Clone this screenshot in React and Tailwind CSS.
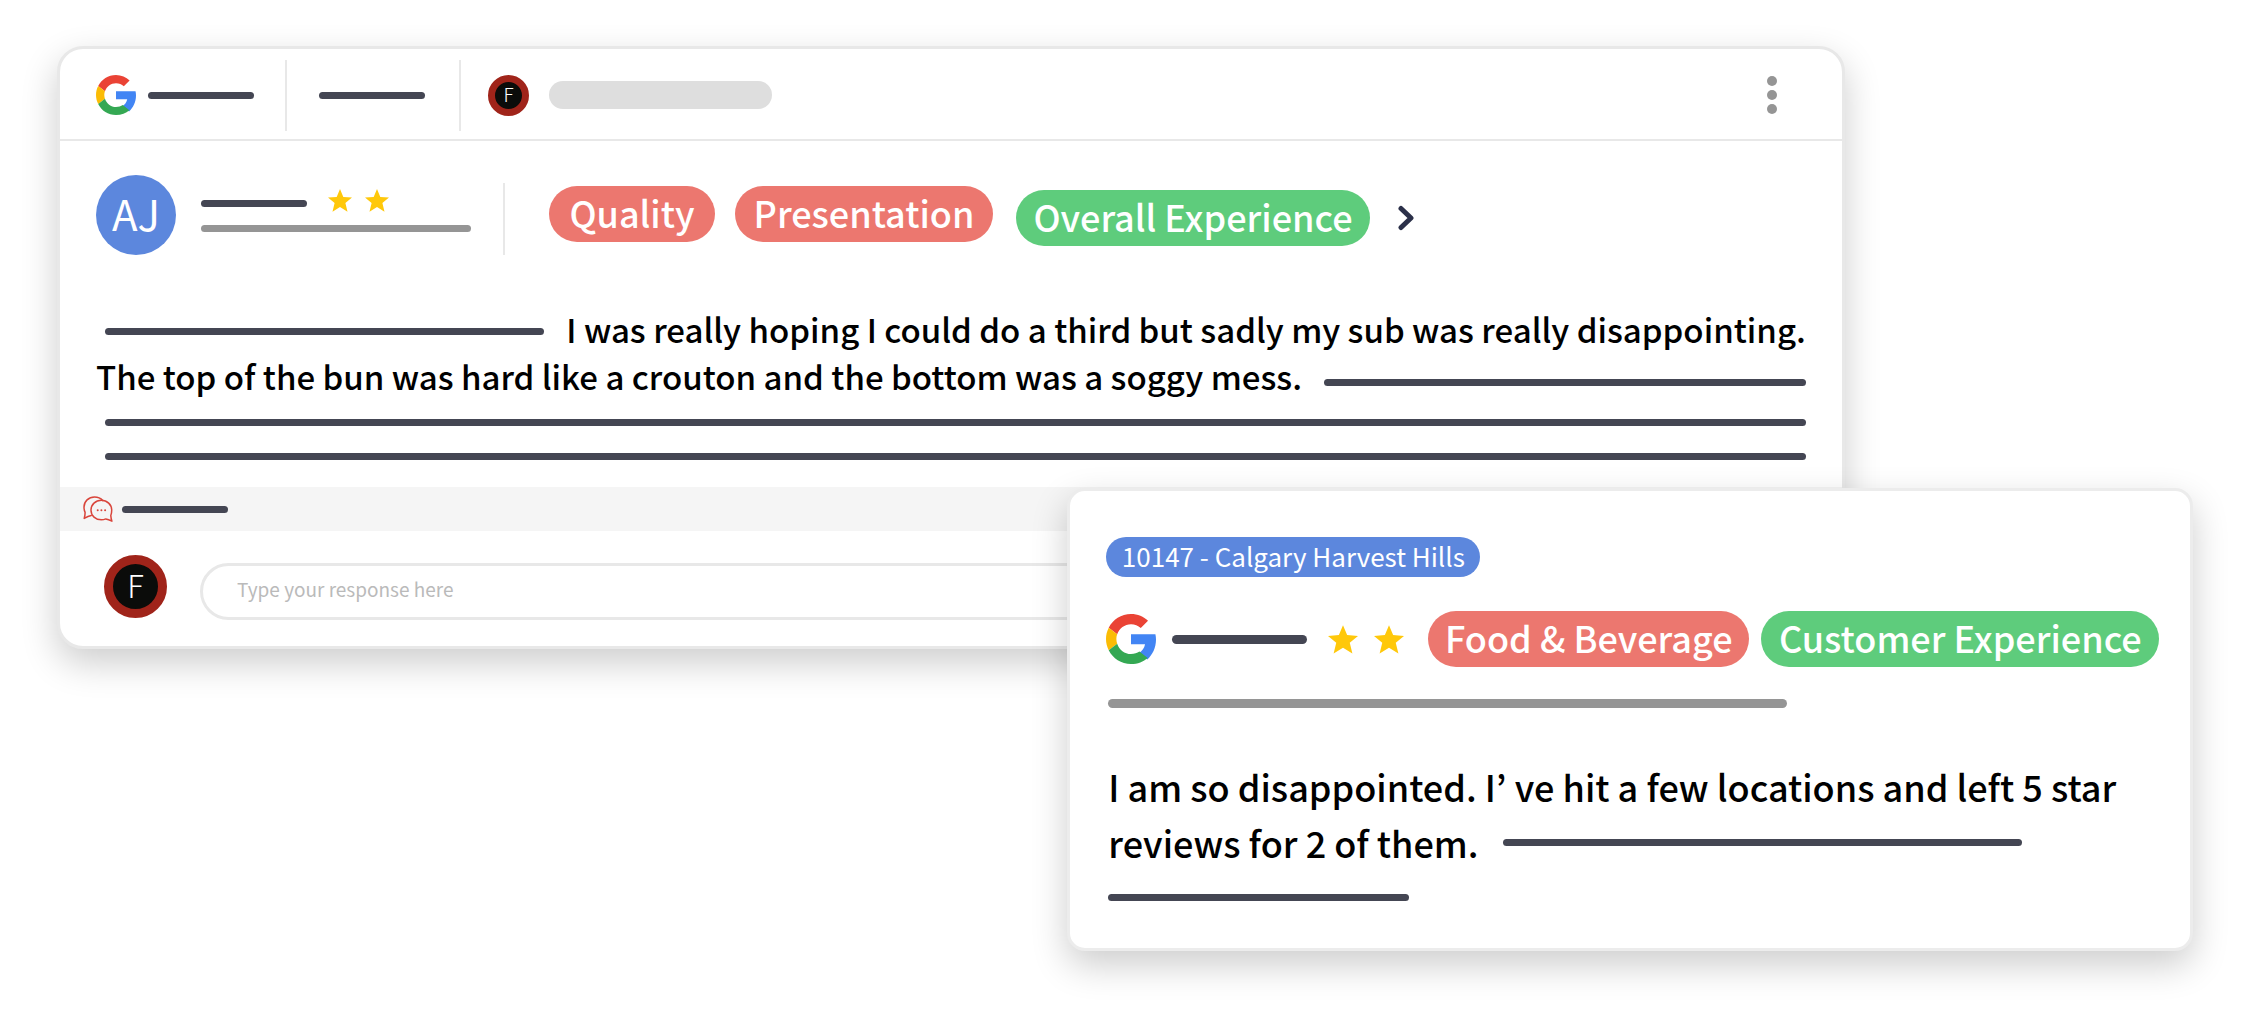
import React from "react";

const FONT = "font-['Noto_Sans_CJK_KR','Noto_Sans_CJK_SC',sans-serif]";

function GoogleLogo({ className }) {
  return (
    <svg viewBox="3 3 42 42" className={className} role="img" aria-label="Google">
      <path fill="#4285F4" d="M44.5 20H24v8.5h11.8c-.6 3.1-2.4 5.6-5 7.300l6.900 5.500C42 37.400 45 31.500 45 24.500c0-1.600-.2-3.100-.5-4.500z" />
      <path fill="#EA4335" d="M24 11.600c3.200 0 6 1.100 8.200 3.200l6.100-6.100C34.600 5.200 29.700 3 24 3 15.800 3 8.700 7.700 5.300 14.600l7.100 5.500C14.100 15.100 18.600 11.600 24 11.600z" />
      <path fill="#FBBC05" d="M12.400 27.900c-.4-1.300-.7-2.600-.7-4s.2-2.700.7-3.900l-7.100-5.400C3.800 17.500 3 20.600 3 24s.8 6.500 2.300 9.400l7.100-5.500z" />
      <path fill="#34A853" d="M24 45c5.700 0 10.500-1.900 14-5.100l-6.900-5.400c-1.900 1.300-4.300 2.100-7.100 2.100-5.400 0-9.900-3.700-11.600-8.700l-7.100 5.500C8.700 40.300 15.800 45 24 45z" />
    </svg>
  );
}

function Star({ className }) {
  return (
    <svg viewBox="0 0 24 23" className={className} aria-hidden="true">
      <path fill="#ffc80a" d="M12 0l3.300 7.900 8.700.7-6.600 5.500 2.100 8.600-7.500-4.700-7.500 4.700 2.100-8.600L0 8.600l8.700-.7z" />
    </svg>
  );
}

function ChatIcon({ className }) {
  return (
    <svg viewBox="0 0 30 26" className={className} fill="none" stroke="#d9453b" strokeWidth="1.500" strokeLinejoin="round" strokeLinecap="round" aria-hidden="true">
      <path d="M8.200 19.400c-2.200.3-4.500 1.400-7 3 .6-2 .9-4 .9-6C1.300 14.800 1 12.900 1 10.900 1 5.400 5.700 1 11.500 1c3.400 0 6.300 1.300 8.200 3.500" />
      <path d="M28.900 25.200c-.6-1.900-1-3.700-1.100-5.600.6-1.600.9-3.500.9-5.400 0-5.600-4.600-9.900-10.400-9.900S8 8.600 8 14.200s4.600 9.600 10.300 9.600c1.600 0 3.100-.3 4.500-.9 1.900.4 3.900 1.200 6.100 2.300z" />
      <path strokeWidth="2" d="M14.700 14.200h.01M18.400 14.200h.01M22.100 14.200h.01" />
    </svg>
  );
}

function Bar({ className }) {
  return <div aria-hidden="true" className={`rounded-full ${className}`} />;
}

function BrandBadge({ className }) {
  return (
    <div className={`flex shrink-0 items-center justify-center rounded-full border-[#a0241a] bg-[#0b0c0a] text-white ${className}`}>
      F
    </div>
  );
}

function Tag({ className, children }) {
  return (
    <span className={`flex h-14 shrink-0 items-center justify-center whitespace-nowrap rounded-full pb-[5px] text-[36px] font-medium text-white ${className}`}>
      {children}
    </span>
  );
}

export default function App() {
  return (
    <main className={`flex flex-col overflow-hidden bg-white pt-[46px] pr-[75px] pb-[82px] pl-[57px] text-black ${FONT}`}>
      <section className="w-[83.7%] rounded-[26px] border-3 border-[#e8e8e8] bg-white shadow-[0_14px_36px_rgba(0,0,0,0.2)]">
        <header className="flex h-[92px] items-center border-b-2 border-[#e8e8e8] pt-[2px] pr-[65px] pl-9">
          <GoogleLogo className="size-10 shrink-0" />
          <Bar className="ml-3 h-[7px] w-[106px] bg-[#444653]" />
          <div className="ml-[31px] h-[71px] w-[2px] bg-[#e8e8e8]" />
          <Bar className="ml-8 h-[7px] w-[106px] bg-[#444653]" />
          <div className="ml-[34px] h-[71px] w-[2px] bg-[#e8e8e8]" />
          <BrandBadge className="ml-[27px] size-[41px] border-[7px] pb-[2px] text-[19px] font-light" />
          <Bar className="ml-5 h-7 w-[223px] bg-[#dedede]" />
          <button type="button" aria-label="More options" className="ml-auto flex flex-col gap-1">
            <span className="size-[10px] rounded-full bg-[#959595]" />
            <span className="size-[10px] rounded-full bg-[#959595]" />
            <span className="size-[10px] rounded-full bg-[#959595]" />
          </button>
        </header>

        <div className="flex items-start pt-[34px] pl-9">
          <div className="flex size-20 shrink-0 items-center justify-center rounded-full bg-[#5c87dd] pb-[6px] text-[42px] text-white">AJ</div>
          <div className="ml-[25px] w-[270px] pt-[14px]">
            <div className="flex items-center">
              <Bar className="mt-[5px] mr-[21px] h-[7px] w-[106px] bg-[#444653]" />
              <div role="img" aria-label="2 stars" className="flex gap-[13px]">
                <Star className="h-[23px] w-6" />
                <Star className="h-[23px] w-6" />
              </div>
            </div>
            <Bar className="mt-[13px] h-[7px] bg-[#959595]" />
          </div>
          <div className="mt-2 ml-8 h-[72px] w-[2px] bg-[#e8e8e8]" />
          <div className="ml-[44px] flex gap-5 pt-[11px]">
            <Tag className="w-[166px] bg-[#ec776f]">Quality</Tag>
            <Tag className="w-[258px] bg-[#ec776f]">Presentation</Tag>
            <Tag className="mt-1 ml-[3px] w-[354px] bg-[#5ecc7c]">Overall Experience</Tag>
          </div>
          <button type="button" aria-label="More topics" className="mt-[30px] ml-7">
            <svg viewBox="0 0 16 26" className="h-[26px] w-4" fill="none" stroke="#2b3049" strokeWidth="5" strokeLinecap="round" strokeLinejoin="round" aria-hidden="true">
              <path d="M3 3.500L13 13L3 22.500" />
            </svg>
          </button>
        </div>

        <div className="px-9 pt-[51px] pb-[27px] text-[33px] leading-[47px] font-medium">
          <div className="flex items-center pl-[9px]">
            <Bar className="mt-1 mr-[22px] h-[7px] grow bg-[#444653]" />
            <p className="whitespace-nowrap">I was really hoping I could do a third but sadly my sub was really disappointing.</p>
          </div>
          <div className="flex items-center">
            <p className="whitespace-nowrap">The top of the bun was hard like a crouton and the bottom was a soggy mess.</p>
            <Bar className="mt-3 ml-[22px] h-[7px] grow bg-[#444653]" />
          </div>
          <Bar className="mt-[19px] ml-[9px] h-[7px] bg-[#444653]" />
          <Bar className="mt-[27px] ml-[9px] h-[7px] bg-[#444653]" />
        </div>

        <div className="flex h-11 items-center bg-[#f5f5f5] pl-[23px]">
          <ChatIcon className="h-[26px] w-[30px]" />
          <Bar className="ml-[9px] h-[7px] w-[106px] bg-[#444653]" />
        </div>

        <form className="flex items-start pt-6 pb-[26px] pl-11">
          <BrandBadge className="size-[63px] border-[9px] pb-[3px] text-[31px] font-light" />
          <input
            type="text"
            aria-label="Response"
            placeholder="Type your response here"
            className="mt-2 mr-9 ml-[33px] h-[57px] grow rounded-full border-3 border-[#e8e8e8] pb-[6px] pl-[34px] text-[19px] placeholder:text-[#bababa]"
          />
        </form>
      </section>

      <section className="relative -mt-[161px] w-[52.7%] self-end rounded-[18px] border-3 border-[#ececec] bg-white pt-[46px] pr-7 pb-[47px] pl-9 shadow-[0_14px_36px_rgba(0,0,0,0.2)]">
        <a href="#location" className="flex h-10 w-[374px] items-center justify-center rounded-full bg-[#5c87dd] pb-[3px] text-[26px] whitespace-nowrap text-white">
          10147 - Calgary Harvest Hills
        </a>
        <div className="mt-[34px] flex items-center">
          <GoogleLogo className="size-[50px] shrink-0" />
          <Bar className="ml-4 h-[9px] w-[135px] shrink-0 bg-[#444653]" />
          <div role="img" aria-label="2 stars" className="ml-[21px] flex shrink-0 gap-4">
            <Star className="h-[29px] w-[30px]" />
            <Star className="h-[29px] w-[30px]" />
          </div>
          <Tag className="ml-6 w-[321px] bg-[#ec776f]">Food &amp; Beverage</Tag>
          <Tag className="ml-3 w-[398px] bg-[#5ecc7c]">Customer Experience</Tag>
        </div>
        <Bar className="mt-8 ml-[2px] h-[9px] w-[679px] bg-[#959595]" />
        <div className="mt-[50px] pl-[2px] text-[36px] leading-[56px] font-medium">
          <p className="whitespace-nowrap">I am so disappointed. I’ ve hit a few locations and left 5 star</p>
          <div className="flex items-center">
            <p className="whitespace-nowrap">reviews for 2 of them.</p>
            <Bar className="ml-6 h-[7px] w-[519px] bg-[#444653]" />
          </div>
        </div>
        <Bar className="mt-6 ml-[2px] h-[7px] w-[301px] bg-[#444653]" />
      </section>
    </main>
  );
}
